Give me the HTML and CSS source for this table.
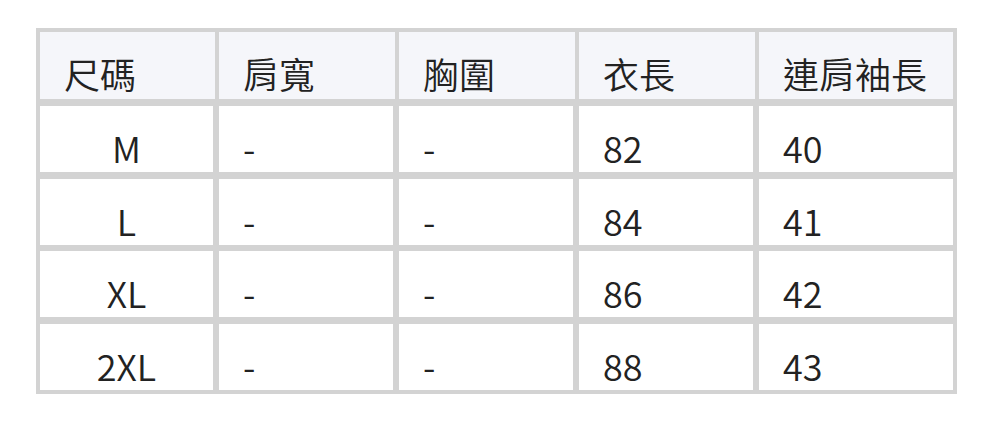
FILE: index.html
```html
<!DOCTYPE html>
<html lang="zh-Hant">
<head>
<meta charset="utf-8">
<title>尺碼表</title>
<link rel="stylesheet" href="styles.css">
</head>
<body>
<div class="size-table">
  <div class="row head">
    <div class="cell">尺碼</div>
    <div class="cell">肩寬</div>
    <div class="cell">胸圍</div>
    <div class="cell">衣長</div>
    <div class="cell">連肩袖長</div>
  </div>
  <div class="body">
    <div class="row">
      <div class="cell size">M</div>
      <div class="cell">-</div>
      <div class="cell">-</div>
      <div class="cell">82</div>
      <div class="cell">40</div>
    </div>
    <div class="row">
      <div class="cell size">L</div>
      <div class="cell">-</div>
      <div class="cell">-</div>
      <div class="cell">84</div>
      <div class="cell">41</div>
    </div>
    <div class="row">
      <div class="cell size">XL</div>
      <div class="cell">-</div>
      <div class="cell">-</div>
      <div class="cell">86</div>
      <div class="cell">42</div>
    </div>
    <div class="row">
      <div class="cell size">2XL</div>
      <div class="cell">-</div>
      <div class="cell">-</div>
      <div class="cell">88</div>
      <div class="cell">43</div>
    </div>
  </div>
</div>
</body>
</html>
```
FILE: styles.css
```css
html, body {
  margin: 0;
  padding: 0;
  background: #ffffff;
}

body {
  padding: 28px 35px 0 36px;
  font-family: "Noto Sans CJK TC", "Noto Sans", sans-serif;
  font-weight: 350;
  color: #222222;
}

.size-table {
  width: 913px;
  padding: 4px;
  background: #d3d3d3;
  display: flex;
  flex-direction: column;
  gap: 7px;
}

.row {
  display: grid;
  grid-template-columns: 173px 174px 174px 174px 1fr;
  column-gap: 6px;
  height: 66px;
}

.row.head {
  grid-template-columns: 175px 176px 176px 176px 1fr;
  column-gap: 4px;
  height: 67px;
}

.body {
  display: flex;
  flex-direction: column;
  gap: 6.5px;
}

.cell {
  background: #ffffff;
  display: flex;
  align-items: flex-end;
  padding: 0 0 7px 24px;
  font-size: 36px;
  line-height: 36px;
  white-space: nowrap;
}

.head .cell {
  background: #f5f6fa;
  padding-bottom: 8px;
}

.cell.size {
  justify-content: center;
  padding-left: 0;
}
```
